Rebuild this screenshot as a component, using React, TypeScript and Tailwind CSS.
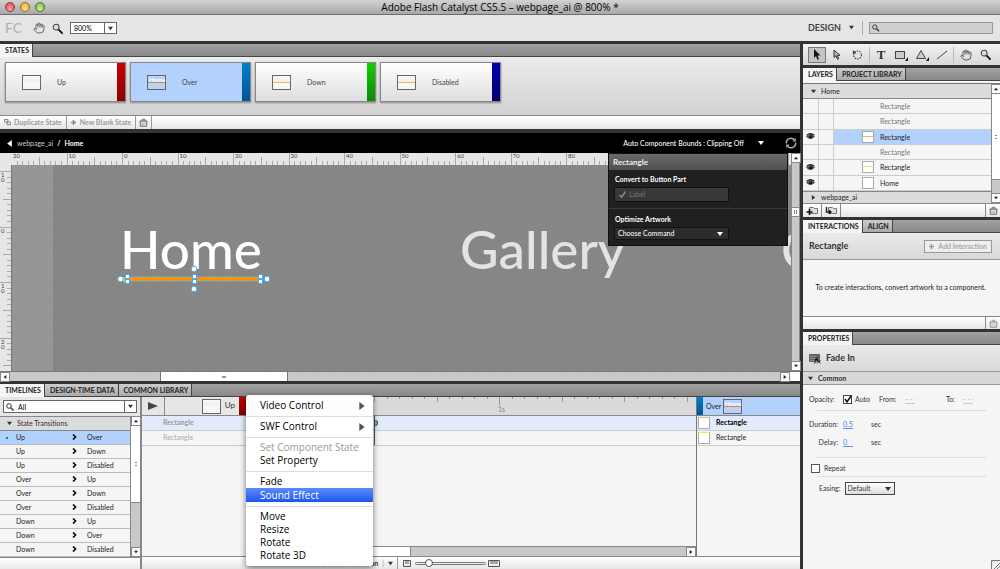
import type { ReactNode } from 'react'
import clsx from 'clsx'
import { Hand } from 'lucide-react'

type StateCard = {
  id: number
  name: string
  bar: string
  line: boolean
  active?: boolean
}

type Layer = {
  id: number
  name: string
  visible: boolean
  thumb?: string
  active?: boolean
}

const states: Array<StateCard> = [
  { id: 0, name: 'Up', bar: 'from-[#c80000] to-[#8a0000]', line: false },
  { id: 1, name: 'Over', bar: 'from-[#0080d0] to-[#005592]', line: true, active: true },
  { id: 2, name: 'Down', bar: 'from-[#10d000] to-[#0a8a08]', line: true },
  { id: 3, name: 'Disabled', bar: 'from-[#0000b0] to-[#000070]', line: true },
]

const layers: Array<Layer> = [
  { id: 0, name: 'Rectangle', visible: false },
  { id: 1, name: 'Rectangle', visible: false },
  { id: 2, name: 'Rectangle', visible: true, thumb: 'border-[#f7b765]', active: true },
  { id: 3, name: 'Rectangle', visible: false },
  { id: 4, name: 'Rectangle', visible: true, thumb: 'border-[#f3e36b]' },
  { id: 5, name: 'Home', visible: true, thumb: 'border-transparent' },
]

const transitions = [
  ['Up', 'Over'],
  ['Up', 'Down'],
  ['Up', 'Disabled'],
  ['Over', 'Up'],
  ['Over', 'Down'],
  ['Over', 'Disabled'],
  ['Down', 'Up'],
  ['Down', 'Over'],
  ['Down', 'Disabled'],
]

const menuGroups = [
  [{ name: 'Video Control', sub: true }],
  [{ name: 'SWF Control', sub: true }],
  [{ name: 'Set Component State', disabled: true }, { name: 'Set Property' }],
  [{ name: 'Fade' }, { name: 'Sound Effect', active: true }],
  [{ name: 'Move' }, { name: 'Resize' }, { name: 'Rotate' }, { name: 'Rotate 3D' }],
] as Array<Array<{ name: string; sub?: boolean; disabled?: boolean; active?: boolean }>>

const Triangle = ({ dir = 'down', className = '' }: { dir?: 'down' | 'up' | 'left' | 'right'; className?: string }) => {
  const d = {
    down: 'M0 1h6L3 5z',
    up: 'M0 5h6L3 1z',
    left: 'M5 0v6L1 3z',
    right: 'M1 0v6l4-3z',
  }[dir]
  return (
    <svg viewBox="0 0 6 6" className={clsx('shrink-0', className || 'size-[5px] text-[#333]')} fill="currentColor">
      <path d={d} />
    </svg>
  )
}

const Magnifier = ({ className = 'size-3' }: { className?: string }) => (
  <svg viewBox="0 0 12 12" className={clsx('shrink-0', className)} fill="none">
    <path d="M7 7l4 4" stroke="#111" strokeWidth="2" strokeLinecap="round" />
    <circle cx="4.5" cy="4.5" r="3.2" fill="#dcdcdc" stroke="#444" strokeWidth="1.1" />
  </svg>
)

const Trash = ({ className = '' }: { className?: string }) => (
  <svg viewBox="0 0 9 9" className={clsx('size-[9px]', className)} fill="none" stroke="#666">
    <path d="M3 1.3h3M.6 4L2 2.200h5L8.400 4z" fill="#bbb" strokeWidth=".8" />
    <path d="M1.300 4v4.300h6.400V4" fill="#ddd" strokeWidth=".9" />
    <path d="M2.500 6h4" stroke="#999" strokeWidth=".8" />
  </svg>
)

const Eye = () => (
  <svg viewBox="0 0 10 8" className="h-[7px] w-[9px]" fill="none">
    <path d="M.5 4Q5-.8 9.500 4 5 8.500.5 4z" fill="#777" stroke="#333" />
    <circle cx="5" cy="3.900" r="2.100" fill="#111" />
    <path d="M.5 2.500Q5-1 9.500 2.500" stroke="#222" strokeWidth="1.200" />
    <circle cx="4.300" cy="3.200" r=".6" fill="#fff" />
  </svg>
)

const Tabs = ({ names, className = '' }: { names: string[]; className?: string }) => (
  <div
    role="tablist"
    className={clsx('flex h-[13px] shrink-0 border-b border-[#444] bg-linear-to-b from-[#a2a2a2] to-[#888]', className)}
  >
    {names.map((name, index) => (
      <button
        key={name}
        role="tab"
        aria-selected={index === 0}
        className={clsx(
          'border-r border-[#444] pr-[3px] pl-[5px] text-[7px] leading-[11px] font-bold text-[#222]',
          index === 0 ? '-mb-px bg-[#f5f5f5]' : 'bg-linear-to-b from-[#ccc] to-[#aaa]',
        )}
      >
        {name}
      </button>
    ))}
  </div>
)

const Thumb = ({ line, label }: { line: boolean; label?: boolean }) => (
  <svg viewBox="0 0 19 15" className="h-[15px] w-[19px] shrink-0">
    <rect x=".5" y=".5" width="18" height="14" fill={label ? '#b9d3f8' : '#f6f6f6'} stroke="#666" />
    <text x="2" y="6.500" fontSize="6" fill={label ? '#fff' : '#f0f0d8'} fontWeight="700">Home</text>
    {line && <path d="M1 7.500h17" stroke={label ? '#d8892f' : '#ffb347'} />}
  </svg>
)

const ArrowButton = ({ dir, label }: { dir: 'up' | 'down' | 'left' | 'right'; label: string }) => (
  <button aria-label={label} className="flex size-[10px] shrink-0 items-center justify-center border border-[#888] bg-[#fafafa]">
    <Triangle dir={dir} className="size-1 text-[#222]" />
  </button>
)

// horizontal canvas ruler, one major tick every ten units
const RulerX = () => (
  <svg className="h-3 w-full" fontSize="6" fill="#444">
    {Array.from({ length: 142 }, (_, i) => {
      const x = Math.round(i * 5.55 - 1) + 0.5
      const y = i % 10 === 0 ? 0 : i % 5 === 0 ? 4 : 8
      return <path key={i} d={`M${x} ${y}V12`} stroke="#aaa" />
    })}
    {Array.from({ length: 14 }, (_, i) => (
      <text key={i} x={i * 55.5 + 1} y="5">{Math.abs(i - 2) * 10}</text>
    ))}
  </svg>
)

const RulerY = () => (
  <svg className="h-full w-[11px]" fontSize="6" fill="#444">
    {Array.from({ length: 40 }, (_, i) => {
      const y = Math.round(i * 5.55 + 6) + 0.5
      const x = i % 10 === 0 ? 0 : i % 5 === 0 ? 3 : 7
      return <path key={i} d={`M${x} ${y}H11`} stroke="#aaa" />
    })}
    {['10', '0', '10', '20'].map((text, i) =>
      text.split('').map((digit, k) => (
        <text key={`${i}-${k}`} x="1" y={i * 55.5 + 12 + k * 5}>{digit}</text>
      )),
    )}
  </svg>
)

const TimeRuler = () => (
  <svg className="h-full w-full" fontSize="7" fill="#888">
    {Array.from({ length: 37 }, (_, i) => {
      const x = Math.round(i * 12.5 + 3) + 0.5
      const y = i === 20 ? 8 : i % 5 === 0 ? 5 : 2
      return <path key={i} d={`M${x} 0V${y}`} stroke="#999" />
    })}
    <text x="252" y="15">1s</text>
  </svg>
)

const TitleBar = () => (
  <header className="flex h-[15px] shrink-0 items-center border-b border-[#6e6e6e] bg-linear-to-b from-[#d2d2d2] to-[#a8a8a8]">
    <div className="flex w-[45px] gap-[5px] pl-[5px]">
      <button aria-label="Close" className="size-[10px] rounded-full border border-[#8d3a38] bg-radial-[at_50%_80%] from-[#ffb0a8] to-[#d9363a]" />
      <button aria-label="Minimize" className="size-[10px] rounded-full border border-[#9a6a25] bg-radial-[at_50%_80%] from-[#ffe9a0] to-[#eb9422]" />
      <button aria-label="Zoom" className="size-[10px] rounded-full border border-[#4b7a30] bg-radial-[at_50%_80%] from-[#d6f5a6] to-[#5fae3c]" />
    </div>
    <h1 className="flex-1 pr-[45px] text-center font-['Open_Sans',sans-serif] text-[10px] leading-[14px] text-black">
      Adobe Flash Catalyst CS5.5 – webpage_ai @ 800% *
    </h1>
  </header>
)

const Toolbar = () => (
  <div className="flex h-[26px] shrink-0 items-center bg-[#e5e5e5] pr-[7px] pl-[5px]">
    <span className="w-7 text-sm leading-4 text-[#b0b0b0]">FC</span>
    <button aria-label="Hand tool"><Hand className="size-3 text-[#444]" strokeWidth={1.5} /></button>
    <button aria-label="Zoom tool" className="ml-[7px]"><Magnifier className="size-[11px]" /></button>
    <div className="relative ml-[7px] flex items-center">
      <select aria-label="Zoom level" className="h-3 w-[47px] appearance-none border border-[#666] bg-white pl-[3px] text-[7px] leading-[10px]">
        <option>800%</option>
      </select>
      <span className="pointer-events-none absolute right-px flex h-[10px] w-3 items-center justify-center border-l border-[#666]">
        <Triangle />
      </span>
    </div>
    <div className="flex-1" />
    <button className="flex items-center gap-2 text-[9px] font-bold text-[#444]">
      DESIGN
      <Triangle />
    </button>
    <div className="mx-[6px] ml-2 h-[14px] w-px bg-[#aaa]" />
    <label className="flex h-3 w-[124px] items-center border border-[#999] bg-[#cfcfcf] pl-[2px]">
      <svg viewBox="0 0 8 8" className="size-2" fill="none" stroke="#333">
        <circle cx="3" cy="3" r="2.300" />
        <path d="M4.800 4.800L7.500 7.500" strokeWidth="1.400" />
      </svg>
      <input aria-label="Search" className="w-full min-w-0 bg-transparent text-[7px] outline-none" />
    </label>
  </div>
)

const StatesPanel = () => (
  <section className="shrink-0">
    <Tabs names={['STATES']} />
    <div className="flex h-[59px] gap-[4px] border-b border-[#888] bg-linear-to-b from-[#ececec] to-[#d2d2d2] pt-[5px] pl-[5px]">
      {states.map((state) => (
        <button
          key={state.id}
          className={clsx(
            'flex h-10 w-[121px] items-center border border-[#888] pl-4 text-[7px] text-[#444] shadow-[0_1px_2px_#888]',
            state.active ? 'bg-[#b3d1fd]' : 'bg-linear-to-b from-white to-[#dedede]',
          )}
        >
          <Thumb line={state.line} label={state.active} />
          <span className="flex-1 pl-4 text-left">{state.name}</span>
          <span className={clsx('h-full w-[8px] bg-linear-to-b', state.bar)} />
        </button>
      ))}
    </div>
    <div className="flex h-[13px] items-stretch bg-linear-to-b from-white to-[#e6e6e6] text-[7px] font-bold text-[#999]">
      <button className="flex items-center gap-[3px] border-r border-[#999] px-1">
        <svg viewBox="0 0 8 8" className="size-[7px]" fill="#eee" stroke="#777">
          <path d="M.5.5h4v3h-4zM3.500 3.500h4v3h-4z" />
        </svg>
        Duplicate State
      </button>
      <button className="flex items-center gap-1 border-r border-[#999] px-1">
        <svg viewBox="0 0 5 5" className="size-[5px]" stroke="#888" strokeWidth="1.500">
          <path d="M2.500 0v5M0 2.500h5" />
        </svg>
        New Blank State
      </button>
      <button aria-label="Delete state" className="flex items-center border-r border-[#999] px-[3px]">
        <Trash />
      </button>
    </div>
  </section>
)

const Selection = () => (
  <svg viewBox="0 0 154 32" className="h-8 w-[154px]">
    <rect x="4" y="14" width="9" height="5" fill="#e8c31c" />
    <rect x="9" y="13.500" width="137" height="5" fill="#ff9000" stroke="#4aa9e6" />
    <g fill="#fff" stroke="#4aa9e6">
      {[11, 78, 144].map((x) => (
        <g key={x}>
          <rect x={x - 2.5} y="11.500" width="4" height="4" />
          <rect x={x - 2.5} y="16.500" width="4" height="4" />
        </g>
      ))}
      <circle cx="3.500" cy="16" r="2.800" />
      <circle cx="150" cy="16" r="2.800" />
      <circle cx="77" cy="6" r="2.800" />
      <circle cx="77" cy="26" r="2.800" />
    </g>
  </svg>
)

const HeadsUp = () => (
  <aside className="absolute top-0 left-[608px] z-10 w-[180px] border border-[#111] bg-[#202020] text-[7px] text-white">
    <h2 className="h-4 bg-linear-to-b from-[#6a6a6a] to-[#505050] pl-1 text-[8px] leading-4 font-bold text-[#eee]">Rectangle</h2>
    <div className="h-[39px] border-b border-[#3c3c3c] px-[5px] pt-1">
      <h3 className="pl-px leading-[10px] font-bold">Convert to Button Part</h3>
      <button disabled className="mt-[3px] flex h-[15px] w-[115px] items-center gap-[3px] border border-[#111] bg-[#383838] pl-1 text-[#777]">
        <svg viewBox="0 0 8 8" className="size-[7px]" fill="none" stroke="#888" strokeWidth="1.800">
          <path d="M.5 4.500L3 7l4.500-6.500" />
        </svg>
        Label
      </button>
    </div>
    <div className="px-[5px] pt-[5px] pb-[5px]">
      <label htmlFor="command" className="block pl-px leading-[10px] font-bold">Optimize Artwork</label>
      <div className="relative mt-[3px] flex w-[115px] items-center">
        <select id="command" className="h-[13px] w-full appearance-none border border-[#111] bg-[#2d2d2d] pl-[3px] leading-[11px]">
          <option>Choose Command</option>
        </select>
        <Triangle className="pointer-events-none absolute right-[6px] size-[6px] text-white" />
      </div>
    </div>
  </aside>
)

const Canvas = () => (
  <section className="flex min-h-[248px] flex-1 flex-col">
    <nav className="flex h-5 shrink-0 items-center bg-black pr-[3px] pl-[6px] text-[7px] text-white">
      <Triangle dir="left" className="size-[7px] text-white" />
      <a href="#webpage" className="ml-1 text-[#ccc]">webpage_ai</a>
      <span className="px-1 font-bold">/</span>
      <a href="#home" className="font-bold">Home</a>
      <div className="flex-1" />
      <button className="flex items-center gap-[14px] font-medium">
        Auto Component Bounds : Clipping Off
        <Triangle className="size-[6px] text-white" />
      </button>
      <button aria-label="Refresh" className="ml-[21px]">
        <svg viewBox="0 0 12 12" className="size-3" fill="none" stroke="#aaa" strokeWidth="1.500">
          <path d="M1.500 6.500A4.500 4.500 0 0 1 9.500 3M10.500 5.500A4.500 4.500 0 0 1 2.500 9" />
          <path d="M10.800 1v3.400H7.400zM1.200 11V7.600h3.400z" fill="#aaa" stroke="none" />
        </svg>
      </button>
    </nav>
    <div className="relative flex min-h-0 flex-1 flex-col">
      <div className="flex min-h-0 flex-1">
        <div className="flex min-w-0 flex-1 flex-col">
          <div className="h-3 shrink-0 bg-[#e6e6e6] pl-3">
            <RulerX />
          </div>
          <div className="flex min-h-0 flex-1">
            <div className="w-3 shrink-0 border-r border-[#777] bg-[#e6e6e6]">
              <RulerY />
            </div>
            <div className="w-[41px] shrink-0 bg-[repeating-linear-gradient(135deg,#939393_0_1px,#979797_1px_3px)]" />
            <div className="relative min-w-0 flex-1 overflow-hidden bg-[repeating-linear-gradient(135deg,#838383_0_1px,#888_1px_3px)]">
              {/* artboard items sit at their own coordinates */}
              <span className="absolute top-[54px] left-[67px] text-[53px] leading-[60px] font-medium text-white">Home</span>
              <span className="absolute top-[54px] left-[407px] text-[53px] leading-[60px] font-medium text-[#e3e3e3]">Gallery</span>
              <span className="absolute top-[54px] left-[728px] text-[53px] leading-[60px] font-medium text-[#e3e3e3]">C</span>
              <div className="absolute top-[98px] left-[64px]"><Selection /></div>
            </div>
          </div>
        </div>
        <div className="flex w-[9px] shrink-0 flex-col items-center border-x border-[#888] bg-[#c8c8c8]">
          <ArrowButton dir="up" label="Scroll up" />
          <div className="h-11" />
          <div className="flex h-[10px] w-full items-center justify-center border-y border-[#888] bg-[#fafafa]">
            <span className="h-1 w-[3px] border-x border-[#888]" />
          </div>
          <div className="flex-1" />
          <ArrowButton dir="down" label="Scroll down" />
        </div>
      </div>
      <div className="flex h-[10px] shrink-0 border-t border-[#777] bg-[#c8c8c8]">
        <ArrowButton dir="left" label="Scroll left" />
        <div className="w-[150px]" />
        <div className="flex w-32 items-center justify-center border-x border-[#777] bg-white">
          <span className="h-[2px] w-1 bg-[#999]" />
        </div>
        <div className="flex-1" />
        <ArrowButton dir="right" label="Scroll right" />
        <div className="w-[10px] bg-white" />
      </div>
      <HeadsUp />
    </div>
  </section>
)

const ContextMenu = () => (
  <div role="menu" className="absolute top-[11px] left-[246px] z-20 w-[127px] rounded-[3px] bg-white/97 py-1 font-['Open_Sans',sans-serif] text-[10px] text-black shadow-[0_2px_6px_#0008]">
    {menuGroups.map((group, index) => (
      <div key={index} className={clsx(index > 0 && 'mt-[4px] border-t border-[#ddd] pt-[3px]')}>
        {group.map((item) => (
          <button
            key={item.name}
            role="menuitem"
            disabled={item.disabled}
            className={clsx(
              'flex w-full items-center justify-between pr-[7px] pl-[14px] leading-[13px] font-medium',
              item.disabled && 'text-[#999]',
              item.active ? 'h-[14px] bg-linear-to-b from-[#5c8bf8] to-[#1c55ee] text-white' : 'h-[13px]',
            )}
          >
            {item.name}
            {item.sub && <Triangle dir="right" className="size-2 text-[#555]" />}
          </button>
        ))}
      </div>
    ))}
  </div>
)

const TransitionList = () => (
  <div className="flex w-[140px] shrink-0 flex-col bg-[#f5f5f5]">
    <div className="flex h-[19px] shrink-0 items-center bg-[#e6e6e6] px-[3px]">
      <div className="flex h-[13px] w-full items-center border border-[#666] bg-white pl-[2px]">
        <svg viewBox="0 0 8 8" className="size-2 shrink-0" fill="none" stroke="#333">
          <circle cx="3" cy="3" r="2.300" />
          <path d="M4.800 4.800L7.500 7.500" strokeWidth="1.400" />
        </svg>
        <input aria-label="Filter transitions" defaultValue="All" className="min-w-0 flex-1 pl-1 text-[7px] leading-[10px] outline-none" />
        <button aria-label="Filter options" className="flex h-full w-3 items-center justify-center border-l border-[#666]">
          <Triangle />
        </button>
      </div>
    </div>
    <div className="flex flex-1">
      <div className="flex-1">
        <button className="flex h-[15px] w-full items-center gap-[5px] border-y border-[#888] bg-[#dcdcdc] pl-[7px] text-[7px] text-[#333]">
          <Triangle />
          State Transitions
        </button>
        <ul className="text-[7px] text-[#222]">
          {transitions.map(([from, to], index) => (
            <li key={index} className={clsx('grid h-[14px] grid-cols-[16px_56px_1fr] items-center border-b border-[#bbb]', index === 0 && 'bg-[#b3d1fd]')}>
              <span className={clsx('ml-[6px] size-[2px]', index === 0 && 'bg-[#0a9a20]')} />
              <span>{from}</span>
              <span className="flex items-center gap-[10px]">
                <svg viewBox="0 0 5 6" className="h-[6px] w-[5px]" fill="none" stroke="#111" strokeWidth="1.700">
                  <path d="M1 .5L3.500 3 1 5.500" />
                </svg>
                {to}
              </span>
            </li>
          ))}
        </ul>
      </div>
      <div className="flex w-[10px] flex-col border-l border-[#888] bg-[#c8c8c8]">
        <ArrowButton dir="up" label="Scroll up" />
        <div className="flex h-[77px] items-center justify-center border-b border-[#888] bg-white">
          <span className="h-1 w-[2px] border-y border-[#888]" />
        </div>
        <div className="flex-1" />
        <ArrowButton dir="down" label="Scroll down" />
      </div>
    </div>
    <div className="h-[13px] shrink-0 border-t border-[#888] bg-linear-to-b from-white to-[#e6e6e6]" />
  </div>
)

const Timelines = () => (
  <section className="relative h-[185px] shrink-0">
    <Tabs names={['TIMELINES', 'DESIGN-TIME DATA', 'COMMON LIBRARY']} />
    <div className="flex h-[172px]">
      <TransitionList />
      <div className="w-[2px] shrink-0 bg-[#888]" />
      <div className="flex min-w-0 flex-1 flex-col">
        <div className="flex min-h-0 flex-1">
          <div className="flex w-[104px] shrink-0 flex-col bg-[#f5f5f5] text-[7px]">
            <div className="flex h-[19px] items-center border-b border-[#888] bg-[#e6e6e6]">
              <button aria-label="Play" className="flex h-full w-[23px] items-center justify-center border-r border-[#888]">
                <svg viewBox="0 0 10 8" className="h-2 w-[10px]" fill="#444"><path d="M0 0v8l10-4z" /></svg>
              </button>
              <div className="ml-auto flex h-full items-center gap-1">
                <Thumb line={false} />
                <span className="text-[8px] text-[#333]">Up</span>
                <span className="h-full w-[7px] bg-linear-to-b from-[#c80000] to-[#8a0000]" />
              </div>
            </div>
            <div className="h-[15px] border-b border-[#ccc] bg-[#e2ebfa] pl-[21px] leading-3 font-bold text-[#999]">Rectangle</div>
            <div className="h-[15px] border-b border-[#ccc] pl-[21px] leading-3 text-[#aaa]">Rectangle</div>
          </div>
          <div className="flex min-w-0 flex-1 flex-col bg-[#f5f5f5]">
            <div className="h-[19px] shrink-0 overflow-hidden border-b border-[#888] bg-[#dadada]">
              <TimeRuler />
            </div>
            <div className="flex h-[15px] shrink-0 items-center border-b border-[#ccc] bg-[#e2ebfa] pl-32">
              <span className="h-[15px] w-px bg-[#45604a]" />
              <span className="h-[6px] w-[3px] rounded-r-full border border-l-0 border-[#456] bg-[#8aa6d6]" />
            </div>
            <div className="flex h-[15px] shrink-0 border-b border-[#ccc] pl-32">
              <span className="h-full w-px bg-[#45604a]" />
            </div>
            <div className="flex-1" />
            <div className="flex h-[10px] border-t border-[#888] bg-[#c8c8c8]">
              <div className="w-[165px] border-r border-[#888] bg-white" />
              <div className="flex-1" />
              <ArrowButton dir="right" label="Scroll right" />
            </div>
          </div>
          <div className="w-[104px] shrink-0 border-l border-[#777] bg-[#f5f5f5] text-[7px] text-[#222]">
            <div className="flex h-[19px] items-center border-b border-[#888] bg-[#b3d1fd]">
              <span className="h-full w-[6px] bg-linear-to-b from-[#0080d0] to-[#005592]" />
              <span className="pr-[2px] pl-[3px]">Over</span>
              <Thumb line label />
            </div>
            {['border-t-[#f7b765]', 'border-t-[#f3e36b]'].map((edge, index) => (
              <div key={edge} className={clsx('flex h-[15px] border-b border-[#ccc] pt-px pl-px', index === 0 && 'bg-[#e2ebfa]')}>
                <span className={clsx('h-3 w-3 border border-[#aaa] bg-white', edge)} />
                <span className={clsx('pl-[6px] leading-[10px]', index === 0 && 'font-bold text-black')}>Rectangle</span>
              </div>
            ))}
          </div>
        </div>
        <div className="flex h-[13px] shrink-0 items-center border-t border-[#888] bg-linear-to-b from-white to-[#e6e6e6] text-[7px] text-[#333]">
          <button className="flex h-full w-[256px] items-center justify-end gap-1 border-r border-[#999] pr-1 font-bold">
            Smooth Transition
            <span className="font-normal text-[#999]">|</span>
            <Triangle />
          </button>
          <svg viewBox="0 0 8 7" className="mx-1 ml-[5px] h-[7px] w-2" fill="none" stroke="#555">
            <path d="M.5.5h7v6h-7zM3 1v3M5 1v3" />
          </svg>
          <input
            type="range"
            aria-label="Timeline zoom"
            defaultValue={14}
            className="h-2 w-[71px] appearance-none bg-transparent [&::-webkit-slider-runnable-track]:h-[3px] [&::-webkit-slider-runnable-track]:rounded-full [&::-webkit-slider-runnable-track]:border [&::-webkit-slider-runnable-track]:border-[#777] [&::-webkit-slider-thumb]:-mt-[4px] [&::-webkit-slider-thumb]:size-2 [&::-webkit-slider-thumb]:appearance-none [&::-webkit-slider-thumb]:rounded-full [&::-webkit-slider-thumb]:border [&::-webkit-slider-thumb]:border-[#555] [&::-webkit-slider-thumb]:bg-white"
          />
          <svg viewBox="0 0 12 7" className="ml-[2px] h-[7px] w-3" fill="none" stroke="#555">
            <path d="M.5.5h11v6H.5zM3 1v3M5 1v3M7 1v3M9 1v3" />
          </svg>
        </div>
      </div>
    </div>
    <ContextMenu />
  </section>
)

const Tool = ({ label, active, children }: { label: string; active?: boolean; children: ReactNode }) => (
  <button
    aria-label={label}
    className={clsx('flex h-4 w-[18px] items-center justify-center border', active ? 'border-[#777] bg-[#c4c4c4]' : 'border-transparent')}
  >
    {children}
  </button>
)

const Tools = () => (
  <div className="flex h-[21px] shrink-0 items-center justify-between bg-linear-to-b from-[#f2f2f2] to-[#d8d8d8] px-[5px]">
    <Tool label="Select" active>
      <svg viewBox="0 0 8 12" className="h-3 w-2"><path d="M1 0v9l2-2 1.500 3.800 1.500-.6L4.500 6.500H7.500z" fill="#111" /></svg>
    </Tool>
    <Tool label="Direct select">
      <svg viewBox="0 0 8 12" className="h-3 w-2"><path d="M1 1v7.500l2-1.800 1.500 3.600 1.200-.5L4.300 6.300H7z" fill="#bbb" stroke="#222" strokeWidth=".9" /></svg>
    </Tool>
    <Tool label="Rotate">
      <svg viewBox="0 0 12 12" className="size-[11px]" fill="none" stroke="#333">
        <circle cx="6" cy="6.500" r="4.300" strokeDasharray="1.500 1.200" strokeWidth="1.200" />
        <path d="M1 1v4h4z" fill="#333" stroke="none" />
      </svg>
    </Tool>
    <div className="h-4 w-px bg-[#bbb]" />
    <Tool label="Text">
      <span className="font-['Liberation_Serif',serif] text-[13px] leading-4 font-bold text-[#333]">T</span>
    </Tool>
    <Tool label="Rectangle">
      <svg viewBox="0 0 14 12" className="h-3 w-[14px]">
        <rect x="1.500" y="2.500" width="9" height="7" fill="#ccc" stroke="#444" />
        <path d="M14 8v4h-3z" fill="#111" />
      </svg>
    </Tool>
    <Tool label="Triangle">
      <svg viewBox="0 0 14 12" className="h-3 w-[14px]">
        <path d="M6 1.500L10.500 9.500h-9z" fill="#ccc" stroke="#444" />
        <path d="M14 8v4h-3z" fill="#111" />
      </svg>
    </Tool>
    <Tool label="Line">
      <svg viewBox="0 0 12 10" className="h-[10px] w-3"><path d="M1 9L11 1" stroke="#444" /></svg>
    </Tool>
    <div className="h-4 w-px bg-[#bbb]" />
    <Tool label="Hand"><Hand className="size-3 text-[#333]" strokeWidth={1.5} /></Tool>
    <Tool label="Zoom"><Magnifier className="size-[11px]" /></Tool>
  </div>
)

const LayersPanel = () => (
  <section className="flex shrink-0 flex-col">
    <Tabs names={['LAYERS', 'PROJECT LIBRARY']} />
    <div className="h-[2px] bg-[#f5f5f5]" />
    <div className="flex border-t border-[#777] text-[7px] text-[#222]">
      <div className="flex-1">
        <button className="flex h-[15px] w-full items-center gap-[5px] border-b border-[#888] bg-[#dcdcdc] pl-[8px]">
          <Triangle />
          Home
        </button>
        <div className="flex h-[92px] flex-col">
          {layers.map((layer) => (
            <div key={layer.id} className="flex flex-1 items-stretch border-b border-[#ccc] bg-[#f5f5f5]">
              <div className="flex w-4 items-center justify-center border-r border-[#ccc]">{layer.visible && <Eye />}</div>
              <div className="w-[15px] border-r border-[#ccc]" />
              <div className={clsx('flex flex-1 items-center pl-7', layer.active && 'bg-[#b3d1fd]')}>
                <div className="w-[18px]">
                  {layer.thumb && (
                    <div className="h-3 w-3 border border-[#aaa] bg-white pt-1">
                      <div className={clsx('border-t', layer.thumb)} />
                    </div>
                  )}
                </div>
                <span className={clsx(!layer.visible && 'text-[#777]')}>{layer.name}</span>
              </div>
            </div>
          ))}
        </div>
        <button className="flex h-3 w-full items-center gap-[5px] border-t border-[#888] bg-[#dcdcdc] pl-[8px]">
          <Triangle dir="right" />
          webpage_ai
        </button>
      </div>
      <div className="flex w-[9px] flex-col items-center border-l border-[#888] bg-[#c8c8c8]">
        <ArrowButton dir="up" label="Scroll up" />
        <div className="flex h-[86px] w-full items-center justify-center border-b border-[#888] bg-white">
          <span className="h-1 w-[2px] border-y border-[#888]" />
        </div>
        <div className="flex-1" />
        <ArrowButton dir="down" label="Scroll down" />
      </div>
    </div>
    <div className="flex h-[14px] border-t border-[#888] bg-linear-to-b from-white to-[#e6e6e6]">
      <button aria-label="New layer" className="flex w-[19px] items-center justify-center border-r border-[#888]">
        <svg viewBox="0 0 12 9" className="h-[9px] w-3" fill="none">
          <path d="M3.500 7.500h8v-5h-3l-1-1h-4z" fill="#ddd" stroke="#777" />
          <path d="M3.500 3v6M.5 6h6" stroke="#111" strokeWidth="1.600" />
        </svg>
      </button>
      <button aria-label="New group" className="flex w-[19px] items-center justify-center border-r border-[#888]">
        <svg viewBox="0 0 12 9" className="h-[9px] w-3" fill="none">
          <path d="M3.500 7.500h8v-5h-3l-1-1h-4z" fill="#ddd" stroke="#777" />
          <path d="M1.500 1v5h2.500" stroke="#222" strokeWidth="1.400" />
          <path d="M4 3.500v5L7 6z" fill="#111" />
        </svg>
      </button>
      <button aria-label="Delete layer" className="ml-auto flex w-[15px] items-center justify-center border-l border-[#888]"><Trash /></button>
    </div>
  </section>
)

const InteractionsPanel = () => (
  <section className="flex shrink-0 flex-col">
    <Tabs names={['INTERACTIONS', 'ALIGN']} />
    <div className="flex h-[27px] items-center justify-between border-b border-[#999] bg-linear-to-b from-[#eaeaea] to-[#d8d8d8] pr-2 pl-[6px]">
      <h2 className="text-[9px] font-bold text-[#333]">Rectangle</h2>
      <button disabled className="flex h-[13px] items-center gap-1 border border-[#999] bg-[#eee] px-1 text-[7px] font-bold text-[#aaa]">
        <svg viewBox="0 0 5 5" className="size-[5px]" stroke="#999" strokeWidth="1.500">
          <path d="M2.500 0v5M0 2.500h5" />
        </svg>
        Add Interaction
      </button>
    </div>
    <p className="h-14 bg-[#f5f5f5] pr-[14px] text-right text-[7px] leading-[54px] whitespace-nowrap text-[#222]">
      To create interactions, convert artwork to a component.
    </p>
    <div className="flex h-[13px] justify-end border-t border-[#888] bg-linear-to-b from-white to-[#e6e6e6]">
      <button aria-label="Delete interaction" className="flex w-[15px] items-center justify-center border-l border-[#888]"><Trash className="opacity-70" /></button>
    </div>
  </section>
)

const HotText = ({ id, value, muted }: { id: string; value: string; muted?: boolean }) => (
  <input
    id={id}
    defaultValue={value}
    className={clsx('h-[10px] w-[10px] border-b bg-transparent text-[7px] leading-[9px] outline-none', muted ? 'border-[#ccc] text-[#aaa]' : 'border-[#5a96f0] text-[#3b82f0]')}
  />
)

const PropertiesPanel = () => (
  <section className="flex flex-1 flex-col bg-[#f5f5f5] text-[7px] text-[#333]">
    <Tabs names={['PROPERTIES']} />
    <div className="flex h-[26px] items-center gap-[5px] bg-linear-to-b from-[#eaeaea] to-[#d8d8d8] pl-[6px]">
      <svg viewBox="0 0 12 11" className="h-[11px] w-3">
        <rect width="11" height="8" y="1" fill="#666" />
        <path d="M1 3.500h6M1 5.500h5M1 7.500h4" stroke="#999" strokeWidth=".7" />
        <path d="M5 10.500c2 0 1-6 4-6M6 6.500h3M8 7l3.500 3.500M11.500 7L8 10.500" stroke="#111" fill="none" strokeWidth=".9" />
      </svg>
      <h2 className="text-[9px] font-bold">Fade In</h2>
    </div>
    <button className="flex h-[14px] items-center gap-[5px] border-y border-[#999] bg-[#d8d8d8] pl-[5px] font-bold">
      <Triangle />
      Common
    </button>
    <div className="px-[6px] pt-2">
      <div className="flex h-3 items-center">
        <span className="w-[34px]">Opacity:</span>
        <label className="flex w-9 items-center gap-[3px]">
          <span className="relative flex size-[9px]">
            <input type="checkbox" defaultChecked className="peer size-[9px] appearance-none border border-[#444] bg-white" />
            <svg viewBox="0 0 9 9" className="pointer-events-none absolute inset-0 hidden size-[9px] overflow-visible peer-checked:block" fill="none" stroke="#111" strokeWidth="1.500">
              <path d="M2 4l2 3 4-6" />
            </svg>
          </span>
          Auto
        </label>
        <label htmlFor="from" className="w-[26px]">From:</label>
        <HotText id="from" value="- - -" muted />
        <label htmlFor="to" className="ml-[31px] w-[17px]">To:</label>
        <HotText id="to" value="- - -" muted />
      </div>
      <div className="mx-2 mt-[5px] border-t border-[#ddd]" />
      <div className="grid grid-cols-[29px_23px_1fr] items-center gap-x-[5px] gap-y-2 pt-2">
        <label htmlFor="duration" className="text-right whitespace-nowrap">Duration:</label>
        <HotText id="duration" value="0.5" />
        <span>sec</span>
        <label htmlFor="delay" className="text-right">Delay:</label>
        <HotText id="delay" value="0" />
        <span>sec</span>
      </div>
      <div className="mx-2 mt-[10px] border-t border-[#ddd]" />
      <label className="mt-[5px] flex items-center gap-1 pl-[2px] leading-[10px]">
        <input type="checkbox" className="size-[9px] appearance-none border border-[#555] bg-white" />
        Repeat
      </label>
      <div className="mx-2 mt-[3px] border-t border-[#ddd]" />
      <div className="flex items-center gap-1 pt-[5px] pl-[10px]">
        <label htmlFor="easing">Easing:</label>
        <div className="relative flex items-center">
          <select id="easing" className="h-[13px] w-[50px] appearance-none border border-[#444] bg-linear-to-b from-white to-[#ddd] pl-[2px] leading-[11px]">
            <option>Default</option>
          </select>
          <Triangle className="pointer-events-none absolute right-1 size-[6px] text-[#333]" />
        </div>
      </div>
    </div>
    <svg viewBox="0 0 9 9" className="mt-auto ml-auto size-[9px]" stroke="#777" fill="#eee">
      <path d="M.5 9V.5H9M3 9l6-6M6 9l3-3" />
    </svg>
  </section>
)

const App = () => {
  return (
    <div className="flex min-h-screen flex-col bg-[#333] font-['Lato',sans-serif] leading-[1.2]">
      <TitleBar />
      <Toolbar />
      <main className="flex flex-1 gap-[3px] pt-[3px]">
        <div className="flex min-w-0 flex-1 flex-col">
          <StatesPanel />
          <div className="h-1 shrink-0" />
          <Canvas />
          <div className="h-[3px] shrink-0" />
          <Timelines />
        </div>
        <div className="flex w-[197px] shrink-0 flex-col gap-[3px]">
          <Tools />
          <LayersPanel />
          <InteractionsPanel />
          <PropertiesPanel />
        </div>
      </main>
    </div>
  )
}

export default App
